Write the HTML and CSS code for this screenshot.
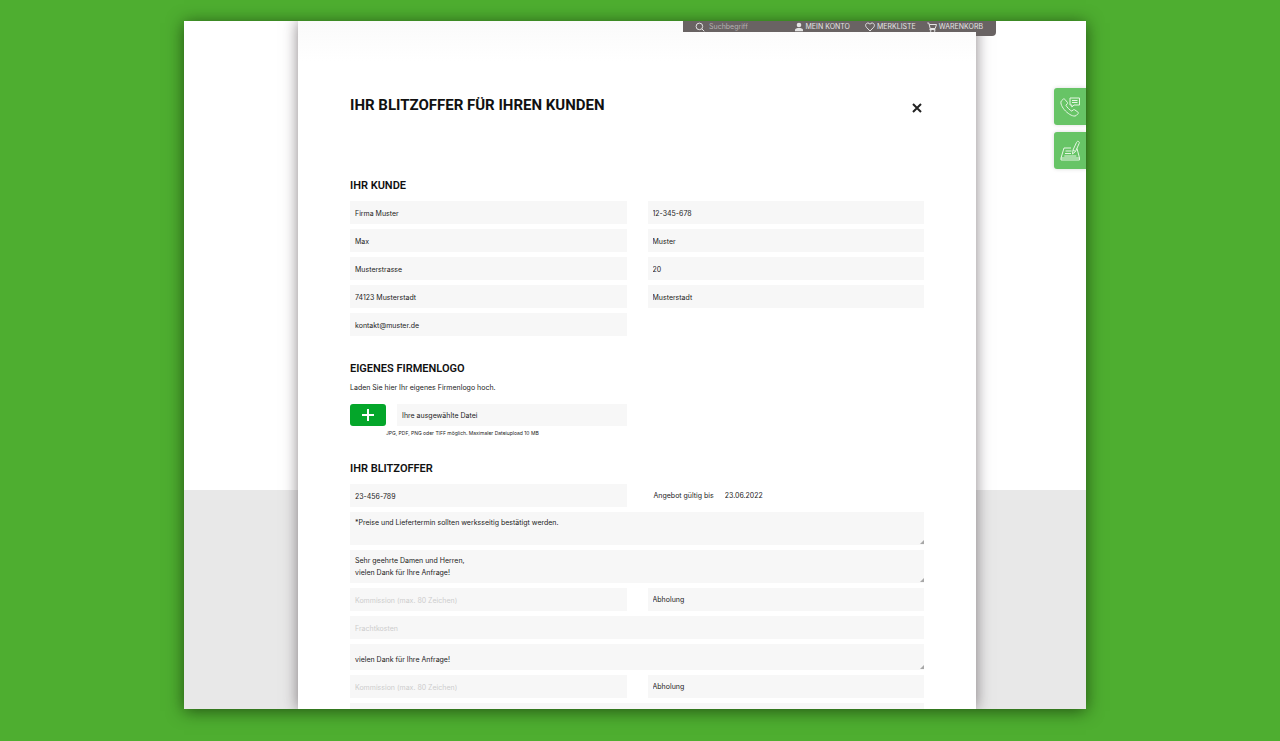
FILE: index.html
```html
<!DOCTYPE html>
<html lang="de">
<head>
<meta charset="utf-8">
<meta name="viewport" content="width=device-width, initial-scale=1">
<title>Ihr Blitzoffer</title>
<link rel="stylesheet" href="styles.css">
</head>
<body>
<div class="window">
  <nav class="toolbar" aria-label="Konto">
    <label class="search">
      <svg class="icon" viewBox="0 0 10 10" aria-hidden="true"><circle cx="4.4" cy="4.4" r="3.3"/><path d="M6.9 6.9 9.3 9.3"/></svg>
      <input class="search-input" type="search" placeholder="Suchbegriff" aria-label="Suchbegriff">
    </label>
    <a class="tool" href="#konto"><svg class="icon solid" viewBox="0 0 10 10" aria-hidden="true"><circle cx="5" cy="3" r="2.3"/><path d="M1 9.2V8C1 6.500 3 6 5 6s4 .5 4 2v1.200z"/></svg>MEIN KONTO</a>
    <a class="tool" href="#merkliste"><svg class="icon" viewBox="0 0 10 10" aria-hidden="true"><path d="M5 9 1.300 5.200C-.3 3 1.200 1 3 1c1 0 1.700.6 2 1.300C5.300 1.600 6 1 7 1c1.800 0 3.300 2 1.700 4.200z"/></svg>MERKLISTE</a>
    <a class="tool cart" href="#warenkorb"><svg class="icon" viewBox="0 0 10 10" aria-hidden="true"><path d="M.3 1h1.500l1.400 5.500h5L9.500 2.500H2.300M3.200 6.500l-.5 1h5.600"/><circle cx="3.700" cy="8.900" r=".5"/><circle cx="7.700" cy="8.900" r=".5"/></svg>WARENKORB</a>
  </nav>

  <main class="dialog">
    <header class="dialog-head">
      <h1 class="title">IHR BLITZOFFER FÜR IHREN KUNDEN</h1>
      <button class="close" type="button" aria-label="Schließen"><svg viewBox="0 0 10 10" aria-hidden="true"><path d="M1 1 9 9M9 1 1 9"/></svg></button>
    </header>
    <form class="form">
      <section>
        <h2 class="heading">IHR KUNDE</h2>
        <div class="fields">
          <input class="field" type="text" aria-label="Firma" value="Firma Muster">
          <input class="field" type="text" aria-label="Kundennummer" value="12-345-678">
          <input class="field" type="text" aria-label="Vorname" value="Max">
          <input class="field" type="text" aria-label="Nachname" value="Muster">
          <input class="field" type="text" aria-label="Straße" value="Musterstrasse">
          <input class="field" type="text" aria-label="Hausnummer" value="20">
          <input class="field" type="text" aria-label="PLZ und Ort" value="74123 Musterstadt">
          <input class="field" type="text" aria-label="Stadt" value="Musterstadt">
          <input class="field" type="email" aria-label="E-Mail" value="kontakt@muster.de">
        </div>
      </section>

      <section>
        <h2 class="heading">EIGENES FIRMENLOGO</h2>
        <p class="intro">Laden Sie hier Ihr eigenes Firmenlogo hoch.</p>
        <div class="fields">
          <div class="upload">
            <button class="add" type="button" aria-label="Datei auswählen"><svg viewBox="0 0 12 12" aria-hidden="true"><path d="M6 0v12M0 6h12"/></svg></button>
            <input class="field file" type="text" aria-label="Datei" value="Ihre ausgewählte Datei" readonly>
          </div>
        </div>
        <p class="note">JPG, PDF, PNG oder TIFF möglich. Maximaler Dateiupload 10 MB</p>
      </section>

      <section>
        <h2 class="heading">IHR BLITZOFFER</h2>
        <div class="fields">
          <input class="field" type="text" aria-label="Angebotsnummer" value="23-456-789">
          <label class="valid">Angebot gültig bis <input class="date" type="text" value="23.06.2022"></label>
          <div class="area wide">
            <textarea class="field text" aria-label="Hinweis">*Preise und Liefertermin sollten werksseitig bestätigt werden.</textarea>
            <svg class="grip" viewBox="0 0 5 5" aria-hidden="true"><path d="M5 0v5H0z"/></svg>
          </div>
          <div class="area wide">
            <textarea class="field text" aria-label="Anschreiben">Sehr geehrte Damen und Herren,
vielen Dank für Ihre Anfrage!</textarea>
            <svg class="grip" viewBox="0 0 5 5" aria-hidden="true"><path d="M5 0v5H0z"/></svg>
          </div>
          <input class="field" type="text" aria-label="Kommission" placeholder="Kommission (max. 80 Zeichen)">
          <select class="field" aria-label="Lieferart"><option>Abholung</option></select>
          <input class="field wide" type="text" aria-label="Frachtkosten" placeholder="Frachtkosten">
          <div class="area wide">
            <textarea class="field text short" aria-label="Schlusstext">vielen Dank für Ihre Anfrage!</textarea>
            <svg class="grip" viewBox="0 0 5 5" aria-hidden="true"><path d="M5 0v5H0z"/></svg>
          </div>
          <input class="field" type="text" aria-label="Kommission 2" placeholder="Kommission (max. 80 Zeichen)">
          <select class="field" aria-label="Lieferart 2"><option>Abholung</option></select>
          <input class="field wide" type="text" aria-label="Frachtkosten 2">
        </div>
      </section>
    </form>
  </main>

  <aside class="side">
    <button class="tab" type="button" aria-label="Kontakt">
      <svg viewBox="0 0 22 22" aria-hidden="true"><path d="M4.200 3.200 2.300 5C1 7 3 11.500 6.500 15s8 6 10.500 4.700l2-2c.5-.6.4-1.200-.1-1.600l-3.200-2.300c-.5-.4-1.100-.3-1.500.1l-1.300 1.300c-2-.9-5-3.900-6-6l1.300-1.300c.4-.4.5-1 .2-1.500L5.800 3.300c-.4-.6-1.100-.6-1.600-.1zM11 2h9.500v7H15l-2.200 2V9H11zM13 4.500h5.500M13 6.500h5.500"/></svg>
    </button>
    <button class="tab" type="button" aria-label="Angebot schreiben">
      <svg viewBox="0 0 22 22" aria-hidden="true"><path d="M12 8H5L2 18v2h18.500v-2L18 8.500M2 18h18.500M6.500 11h6M6 13.500h6M5.300 16h12M13.500 14l.5-4 3.500-7.500c.5-1 1-1.500 2-1s1 1.200.5 2.200L16.500 11.500zM14 10l2.500 1.500"/></svg>
    </button>
  </aside>
</div>
</body>
</html>
```
FILE: styles.css
```css
* { box-sizing: border-box; }

body {
  margin: 0;
  height: 100vh;
  padding: 21px 194px 32px 184px;
  background: #4eae30;
  color: #222;
  font: 7px/12px Inter, "Liberation Sans", sans-serif;
}

h1, h2, p { margin: 0; }
button, input, select, textarea { font: inherit; color: inherit; border: 0; margin: 0; border-radius: 0; }
button { padding: 0; cursor: pointer; }
svg { fill: none; stroke: currentColor; }

.window {
  position: relative;
  height: 100%;
  padding: 0 110px 0 114px;
  background: linear-gradient(#fff 0 68.200%, #e8e8e8 68.200%);
  box-shadow: 0 2px 16px rgba(20, 50, 10, .75);
}

.dialog {
  height: 100%;
  overflow: hidden;
  padding: 75px 52px 0;
  background: linear-gradient(#fafafa, #fff 40px);
  box-shadow: 0 0 14px rgba(60, 50, 55, .6);
  clip-path: inset(0 -30px);
}

.toolbar {
  position: absolute;
  top: 0;
  right: 90px;
  z-index: 2;
  display: flex;
  align-items: center;
  gap: 15px;
  width: 313px;
  height: 11px;
  padding: 0 13px 0 12px;
  background: #696363;
  color: #e4e4e4;
}

.toolbar::after {
  content: "";
  position: absolute;
  top: 0;
  right: 0;
  z-index: -1;
  width: 20px;
  height: 15px;
  border-radius: 0 0 4px 0;
  background: #696363;
}

.search { display: flex; flex: 1; align-items: center; gap: 4px; min-width: 0; }
.search-input { width: 100%; min-width: 0; padding: 0; background: none; outline: 0; }
.search-input::placeholder { color: #b5b1b1; opacity: 1; }
.tool { display: flex; align-items: center; gap: 2px; color: inherit; text-decoration: none; white-space: nowrap; }
.cart { margin-left: -4px; }
.icon { flex: none; width: 10px; height: 10px; }
.solid { fill: currentColor; stroke: none; }

.dialog-head { display: flex; justify-content: space-between; align-items: flex-start; margin-bottom: 61px; }
.title { color: #111; font: 700 15px/18px Roboto, "Liberation Sans", sans-serif; }
.close { display: grid; place-items: center; width: 14px; height: 18px; margin-top: 3px; background: none; }
.close svg { width: 10px; height: 10px; stroke-width: 2; }

.form { display: grid; gap: 25px; }
.heading { margin-bottom: 7px; color: #111; font: 600 11px/16px Roboto, "Liberation Sans", sans-serif; }

.fields { display: grid; grid-template-columns: 1fr 1fr; gap: 5px 21px; }
.wide { grid-column: 1 / -1; }

.field {
  display: block;
  width: 100%;
  height: 23px;
  padding: 1px 5px 0;
  background: #f7f7f7;
  outline: 0;
  appearance: none;
}
.field::placeholder { color: #cdcdcd; opacity: 1; }

.area { position: relative; }
.text { height: 33px; padding: 5px 5px 0; resize: none; overflow: hidden; }
.short { height: 26px; padding-top: 10px; }
.grip { position: absolute; right: 0; bottom: 1px; width: 4px; height: 4px; fill: #a8a8a8; stroke: none; }

.intro { margin: -2px 0 10px; }
.upload { display: flex; gap: 11px; }
.add {
  display: grid;
  flex: none;
  place-items: center;
  width: 36px;
  height: 22px;
  border-radius: 3px;
  background: #04a62a;
  color: #fff;
}
.add svg { width: 12px; height: 12px; stroke-width: 2; }
.file { height: 22px; }
.note { margin: 3px 0 -1px 36px; font-size: 5px; line-height: 8px; }

.valid { display: flex; align-items: center; gap: 11px; padding-left: 6px; white-space: nowrap; }
.date { width: 60px; padding: 0; background: none; outline: 0; }

.side { position: absolute; top: 67px; right: 0; display: grid; gap: 7px; }
.tab {
  display: grid;
  place-items: center;
  width: 32px;
  height: 37px;
  border-radius: 3px 0 0 3px;
  background: #67c466;
  color: #e6f6e4;
  box-shadow: 0 0 4px rgba(0, 0, 0, .15);
}
.tab svg { width: 22px; height: 22px; }
```
